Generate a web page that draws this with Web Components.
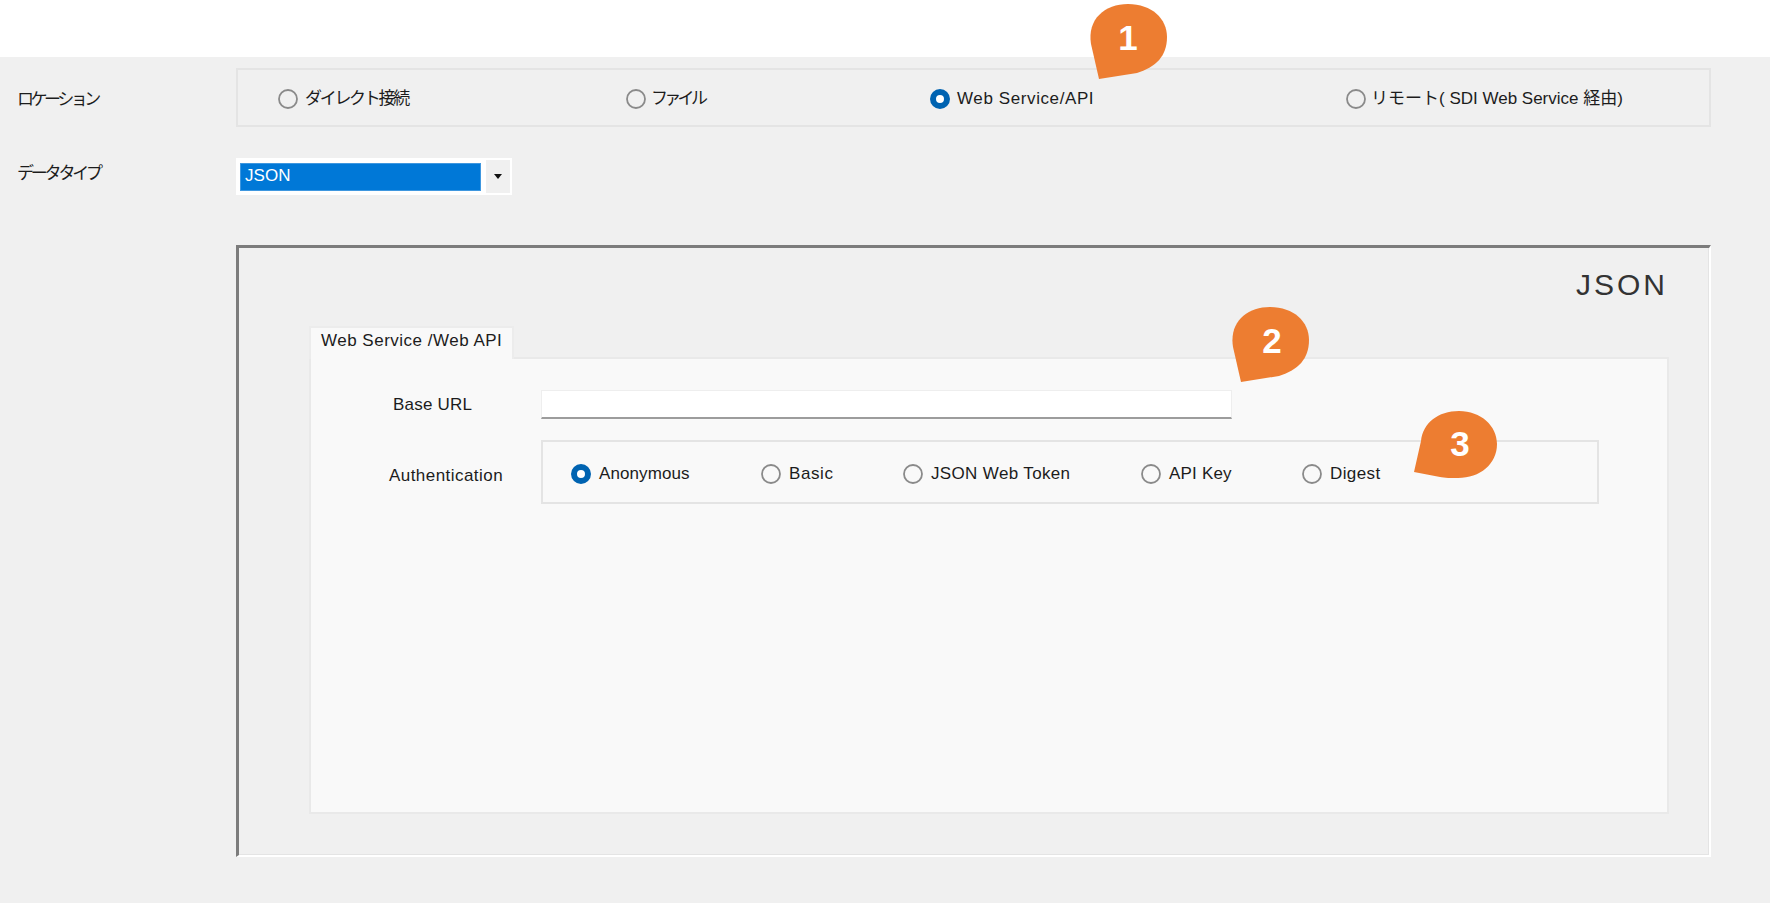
<!DOCTYPE html>
<html lang="ja">
<head>
<meta charset="utf-8">
<title>データソース</title>
<style>
  html, body { margin: 0; padding: 0; background: #f0f0f0; }
  body { font-family: "Liberation Sans", "Noto Sans CJK JP", sans-serif; color: #1c1c1c; overflow: hidden; }
</style>
</head>
<body>

<form-page>
  <form-row label="ロケーション" spacing="-3.5px" pad="21" style="margin-top:11px">
    <radio-group style="width:1475px;height:59px;padding:3px 0 0 40px;--radio-gap:7px">
      <form-radio style="width:348px" spacing="-2.3px">ダイレクト接続</form-radio>
      <form-radio style="width:304px;--radio-gap:5px" spacing="-3.7px">ファイル</form-radio>
      <form-radio style="width:416px" checked spacing=".6px">Web Service/API</form-radio>
      <form-radio style="--radio-gap:5px" spacing="0">リモート( SDI Web Service 経由)</form-radio>
    </radio-group>
  </form-row>

  <form-row label="データタイプ" spacing="-3.2px" pad="5" style="margin-top:31px">
    <combo-box value="JSON"></combo-box>
  </form-row>

  <json-frame heading="JSON" style="margin:50px 0 0 236px">
    <tab-panel tab="Web Service /Web API">
      <panel-field label="Base URL" indent="82" style="margin-top:31px">
        <text-box></text-box>
      </panel-field>
      <panel-field label="Authentication" indent="78" drop="7" spacing=".45px" style="margin-top:21px">
        <radio-group style="width:1058px;height:64px;padding:4px 0 0 28px">
          <form-radio style="width:190px" spacing=".1px" checked>Anonymous</form-radio>
          <form-radio style="width:142px" spacing=".6px">Basic</form-radio>
          <form-radio style="width:238px" spacing=".35px">JSON Web Token</form-radio>
          <form-radio style="width:161px">API Key</form-radio>
          <form-radio spacing=".4px">Digest</form-radio>
        </radio-group>
      </panel-field>
    </tab-panel>
  </json-frame>

  <pin-callout style="left:1090px;top:4px" shape="a">1</pin-callout>
  <pin-callout style="left:1232px;top:307px" shape="a" dx="2">2</pin-callout>
  <pin-callout style="left:1414px;top:411px" shape="b" dx="1">3</pin-callout>
</form-page>

<script>
// Windows-forms look: flat grey dialog with a white strip on top
class FormPage extends HTMLElement {
  constructor() {
    super();
    this.attachShadow({ mode: 'open' }).innerHTML = `
      <style>
        :host { display:block; position:relative; width:1770px; height:903px; overflow:hidden; background:#f0f0f0; }
        .top { height:57px; background:#fff; }
      </style>
      <div class="top"></div>
      <slot></slot>`;
  }
}

class FormRow extends HTMLElement {
  constructor() {
    super();
    this.attachShadow({ mode: 'open' });
  }
  connectedCallback() {
    const spacing = this.getAttribute('spacing') || '0';
    this.shadowRoot.innerHTML = `
      <style>
        :host { display:flex; align-items:flex-start; }
        .lbl { width:236px; box-sizing:border-box; padding:${this.getAttribute('pad')}px 0 0 17px; font-size:17px; line-height:22px; letter-spacing:${spacing}; white-space:nowrap; }
      </style>
      <div class="lbl">${this.getAttribute('label')}</div>
      <slot></slot>`;
  }
}

class RadioGroup extends HTMLElement {
  constructor() {
    super();
    this.attachShadow({ mode: 'open' }).innerHTML = `
      <style>
        :host { display:flex; align-items:center; box-sizing:border-box; border:2px solid #e4e4e4; }
      </style>
      <slot></slot>`;
  }
}

class FormRadio extends HTMLElement {
  constructor() {
    super();
    this.attachShadow({ mode: 'open' });
  }
  connectedCallback() {
    const on = this.hasAttribute('checked');
    const spacing = this.getAttribute('spacing') || '.2px';
    const mark = on
      ? '<circle cx="10" cy="10" r="7" fill="#fff" stroke="#0063b1" stroke-width="6"/>'
      : '<circle cx="10" cy="10" r="9" fill="none" stroke="#8a8a8a" stroke-width="1.8"/>';
    this.shadowRoot.innerHTML = `
      <style>
        :host { display:flex; align-items:center; gap:var(--radio-gap, 8px); flex:none; font-size:17px; line-height:22px; white-space:nowrap; }
        svg { width:20px; height:20px; flex:none; }
        span { letter-spacing:${spacing}; }
      </style>
      <svg viewBox="0 0 20 20">${mark}</svg>
      <span><slot></slot></span>`;
  }
}

class ComboBox extends HTMLElement {
  constructor() {
    super();
    this.attachShadow({ mode: 'open' });
  }
  connectedCallback() {
    this.shadowRoot.innerHTML = `
      <style>
        :host { display:flex; width:276px; height:37px; box-sizing:border-box; background:#fff; padding:4px 2px 4px 4px; }
        .val { width:241px; height:28px; margin-top:1px; box-sizing:border-box; background:#0078d7; border:1px solid #3f97df; color:#fff; font-size:17px; line-height:23px; padding-left:4px; letter-spacing:.1px; }
        .btn { width:24px; margin:-2px 0 -2px 5px; background:#f0f0f0; display:flex; align-items:center; justify-content:center; }
        svg { width:10px; height:6px; }
      </style>
      <div class="val">${this.getAttribute('value')}</div>
      <div class="btn"><svg viewBox="0 0 10 6"><path d="M1 0h8L5 5z" fill="#111"/></svg></div>`;
  }
}

class JsonFrame extends HTMLElement {
  constructor() {
    super();
    this.attachShadow({ mode: 'open' });
  }
  connectedCallback() {
    this.shadowRoot.innerHTML = `
      <style>
        :host { display:block; width:1475px; height:612px; box-sizing:border-box; border-top:3px solid #7c7c7c; border-left:3px solid #7c7c7c; border-right:2px solid #fff; border-bottom:2px solid #fff; box-shadow:inset -1px -1px 0 #e4e4e4; padding:20px 0 0 70px; }
        h2 { margin:0 41px 24px 0; font-weight:400; font-size:30px; line-height:34px; letter-spacing:3px; text-align:right; color:#333; }
      </style>
      <h2>${this.getAttribute('heading')}</h2>
      <slot></slot>`;
  }
}

class TabPanel extends HTMLElement {
  constructor() {
    super();
    this.attachShadow({ mode: 'open' });
  }
  connectedCallback() {
    this.shadowRoot.innerHTML = `
      <style>
        :host { display:block; width:1360px; }
        .tab { width:205px; height:33px; box-sizing:border-box; border:2px solid #ececec; border-bottom:0; background:#f9f9f9; font-size:17px; line-height:26px; padding-left:10px; letter-spacing:.5px; white-space:nowrap; position:relative; z-index:1; margin-bottom:-2px; }
        .body { height:457px; box-sizing:border-box; border:2px solid #e9e9e9; background:#f9f9f9; overflow:hidden; }
      </style>
      <div class="tab">${this.getAttribute('tab')}</div>
      <div class="body"><slot></slot></div>`;
  }
}

class PanelField extends HTMLElement {
  constructor() {
    super();
    this.attachShadow({ mode: 'open' });
  }
  connectedCallback() {
    const spacing = this.getAttribute('spacing') || '.2px';
    const drop = this.getAttribute('drop') || 0;
    this.shadowRoot.innerHTML = `
      <style>
        :host { display:flex; align-items:center; font-size:17px; line-height:22px; }
        .lbl { width:230px; box-sizing:border-box; padding:${drop}px 0 0 ${this.getAttribute('indent')}px; letter-spacing:${spacing}; white-space:nowrap; }
      </style>
      <div class="lbl">${this.getAttribute('label')}</div>
      <slot></slot>`;
  }
}

class TextBox extends HTMLElement {
  constructor() {
    super();
    this.attachShadow({ mode: 'open' }).innerHTML = `
      <style>
        :host { display:block; width:691px; height:29px; box-sizing:border-box; background:#fff; border:1px solid #eee; border-bottom:2px solid #9c9c9c; }
      </style>`;
  }
}

// orange numbered marker, tip points to the lower left
class PinCallout extends HTMLElement {
  constructor() {
    super();
    this.attachShadow({ mode: 'open' });
  }
  connectedCallback() {
    const wide = this.getAttribute('shape') === 'b';
    const path = wide
      ? 'M0 61 L7 30 C9 12 24 0 45 0 C67 0 83 15 83 33 C83 53 66 67 44 67 C38 67 30 67 26 66 Z'
      : 'M9 75 L1 40 C-3 15 15 0 38 0 C62 0 77 15 77 33 C77 52 66 63 47 69 Z';
    const w = wide ? 83 : 77;
    const h = wide ? 67 : 76;
    const cx = (wide ? 45 : 38) + Number(this.getAttribute('dx') || 0);
    const cy = wide ? 33 : 34;
    this.shadowRoot.innerHTML = `
      <style>
        :host { position:absolute; display:block; width:${w}px; height:${h}px; }
        svg { position:absolute; inset:0; width:100%; height:100%; overflow:visible; }
        span { position:absolute; left:${cx - 20}px; top:${cy - 20}px; width:40px; height:40px; line-height:40px; text-align:center; font-size:35px; font-weight:700; color:#fff; }
      </style>
      <svg viewBox="0 0 ${w} ${h}"><path d="${path}" fill="#ed7d31"/></svg>
      <span><slot></slot></span>`;
  }
}

customElements.define('form-page', FormPage);
customElements.define('form-row', FormRow);
customElements.define('radio-group', RadioGroup);
customElements.define('form-radio', FormRadio);
customElements.define('combo-box', ComboBox);
customElements.define('json-frame', JsonFrame);
customElements.define('tab-panel', TabPanel);
customElements.define('panel-field', PanelField);
customElements.define('text-box', TextBox);
customElements.define('pin-callout', PinCallout);
</script>
</body>
</html>
